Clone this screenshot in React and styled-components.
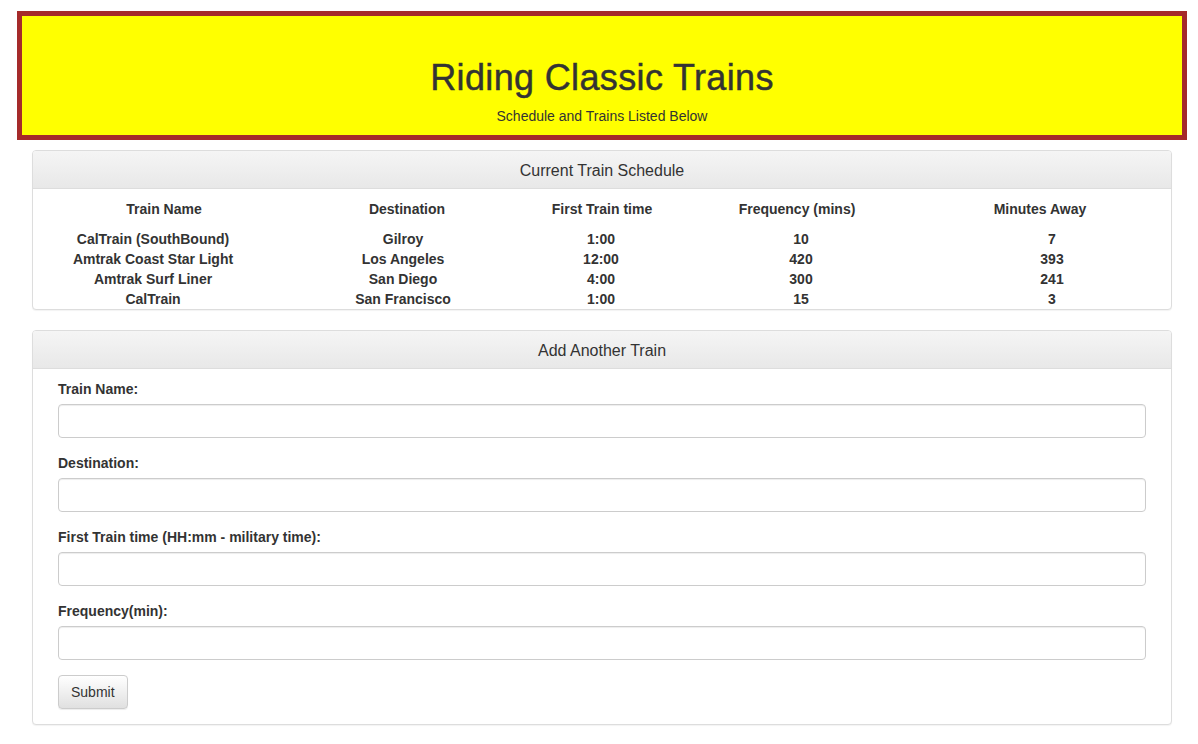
import React from 'react';
import styled, { createGlobalStyle } from 'styled-components';

const GlobalStyle = createGlobalStyle`
  html, body {
    margin: 0;
    padding: 0;
    background: #fff;
    font-family: "Liberation Sans", Arial, Helvetica, sans-serif;
    font-size: 14px;
    line-height: 20px;
    color: #333;
  }
  * { box-sizing: border-box; }
`;

const Page = styled.div`
  width: 1170px;
  margin: 0 0 0 17px;
  padding-top: 11px;
`;

const Jumbo = styled.header`
  height: 129px;
  background: #ffff00;
  border: 5px solid #a52a2a;
  text-align: center;
  padding-top: 42px;
`;

const Title = styled.h1`
  margin: 0;
  font-size: 36px;
  line-height: 40px;
  font-weight: 500;
  letter-spacing: 0.35px;
  color: #333;
  -webkit-text-stroke: 0.45px #333;
`;

const Subtitle = styled.p`
  margin: 8px 0 0;
  font-size: 14px;
  line-height: 20px;
  color: #333;
`;

const Content = styled.div`
  padding: 10px 15px 0;
`;

const Panel = styled.section`
  border: 1px solid #ddd;
  border-radius: 4px;
  background: #fff;
  box-shadow: 0 1px 1px rgba(0, 0, 0, 0.05);
  margin-bottom: 20px;
  overflow: hidden;
`;

const PanelHeading = styled.div`
  height: 38px;
  line-height: 39px;
  text-align: center;
  font-size: 16px;
  color: #333;
  background: linear-gradient(to bottom, #f5f5f5 0%, #e8e8e8 100%);
  border-bottom: 1px solid #ddd;
`;

const HeadRow = styled.div`
  display: grid;
  grid-template-columns: 262px 224px 166px 224px 1fr;
  padding: 10px 0;
`;

const BodyRows = styled.div`
  display: grid;
  grid-template-columns: 240px 260px 136px 264px 1fr;
`;

const Cell = styled.div`
  text-align: center;
  font-weight: bold;
  font-size: 14px;
  line-height: 20px;
  color: #333;
`;

const FormBody = styled.form`
  padding: 10px 25px 15px;
`;

const Group = styled.div`
  margin-bottom: 15px;
`;

const Label = styled.label`
  display: block;
  font-weight: bold;
  font-size: 14px;
  line-height: 20px;
  margin-bottom: 5px;
`;

const Input = styled.input`
  display: block;
  width: 100%;
  height: 34px;
  border: 1px solid #ccc;
  border-radius: 4px;
  box-shadow: inset 0 1px 1px rgba(0, 0, 0, 0.075);
  font: inherit;
  padding: 6px 12px;
`;

const Button = styled.button`
  height: 34px;
  padding: 6px 12px;
  font-family: inherit;
  font-size: 14px;
  line-height: 20px;
  color: #333;
  border: 1px solid #ccc;
  border-radius: 4px;
  background: linear-gradient(to bottom, #fff 0%, #e0e0e0 100%);
  box-shadow: inset 0 1px 0 rgba(255, 255, 255, 0.15), 0 1px 1px rgba(0, 0, 0, 0.075);
`;

const headers = ['Train Name', 'Destination', 'First Train time', 'Frequency (mins)', 'Minutes Away'];

const trains = [
  ['CalTrain (SouthBound)', 'Gilroy', '1:00', '10', '7'],
  ['Amtrak Coast Star Light', 'Los Angeles', '12:00', '420', '393'],
  ['Amtrak Surf Liner', 'San Diego', '4:00', '300', '241'],
  ['CalTrain', 'San Francisco', '1:00', '15', '3'],
];

const fields = [
  'Train Name:',
  'Destination:',
  'First Train time (HH:mm - military time):',
  'Frequency(min):',
];

export default function App() {
  return (
    <>
      <GlobalStyle />
      <Page>
        <Jumbo>
          <Title>Riding Classic Trains</Title>
          <Subtitle>Schedule and Trains Listed Below</Subtitle>
        </Jumbo>
        <Content>
          <Panel>
            <PanelHeading>Current Train Schedule</PanelHeading>
            <HeadRow>
              {headers.map((h) => (
                <Cell key={h}>{h}</Cell>
              ))}
            </HeadRow>
            <BodyRows>
              {trains.map((row, i) =>
                row.map((v, j) => <Cell key={i + '-' + j}>{v}</Cell>)
              )}
            </BodyRows>
          </Panel>
          <Panel>
            <PanelHeading>Add Another Train</PanelHeading>
            <FormBody onSubmit={(e) => e.preventDefault()}>
              {fields.map((f) => (
                <Group key={f}>
                  <Label>{f}</Label>
                  <Input type="text" />
                </Group>
              ))}
              <Button type="submit">Submit</Button>
            </FormBody>
          </Panel>
        </Content>
      </Page>
    </>
  );
}
